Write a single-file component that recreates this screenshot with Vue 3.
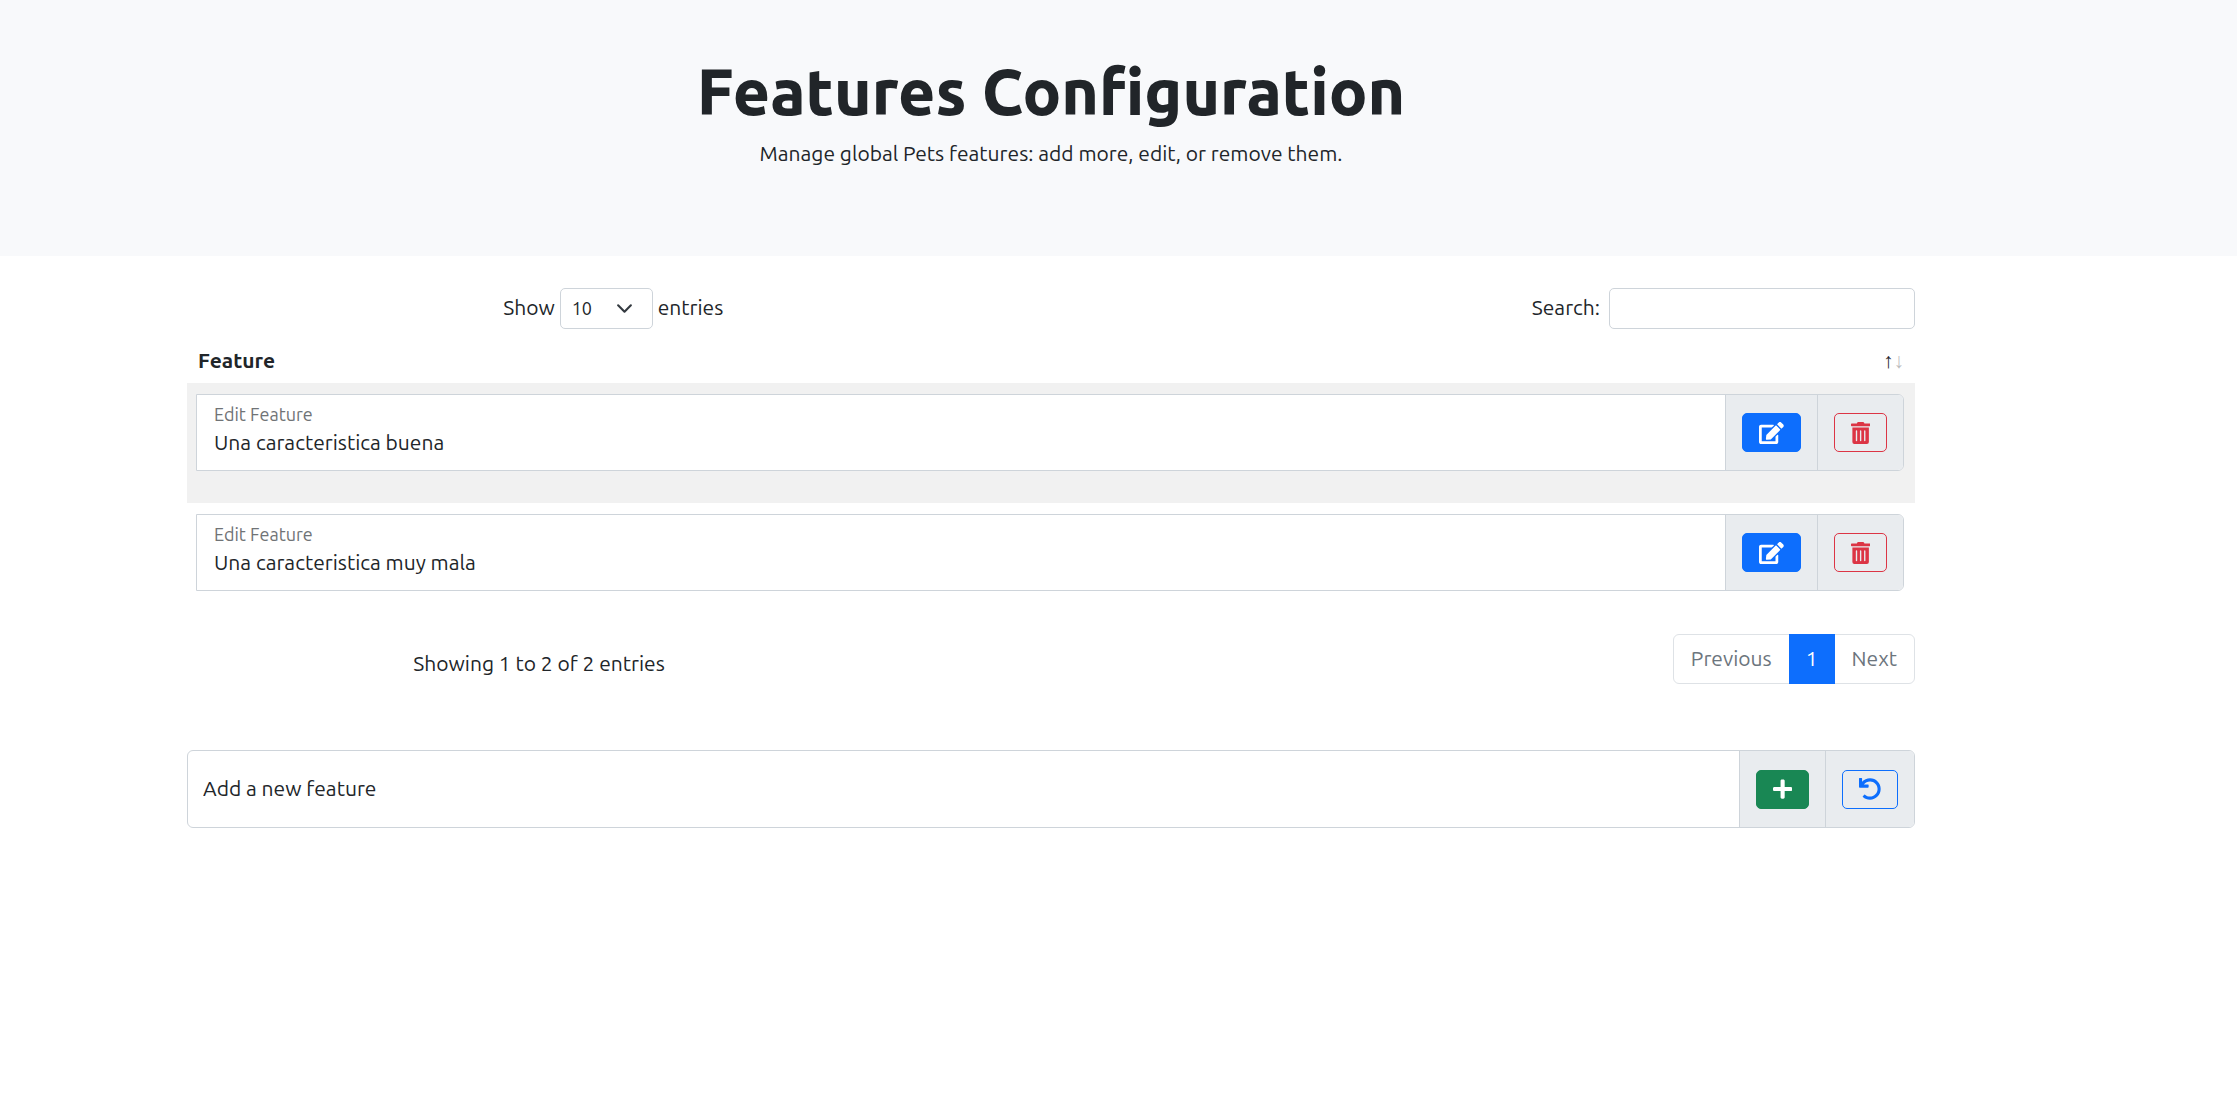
<script setup>
import { ref } from 'vue'

const icons = {
  edit: { box: '0 0 576 512', d: 'M402.6 83.2l90.2 90.2c3.8 3.8 3.8 10 0 13.8L274.4 405.6l-92.8 10.3c-12.4 1.4-22.9-9.1-21.5-21.5l10.3-92.8L388.8 83.2c3.8-3.8 10-3.8 13.8 0zm162-22.9l-48.8-48.8c-15.2-15.2-39.9-15.2-55.2 0l-35.4 35.4c-3.8 3.8-3.8 10 0 13.8l90.2 90.2c3.8 3.8 10 3.8 13.8 0l35.4-35.4c15.2-15.3 15.2-40 0-55.2zM384 346.2V448H64V128h229.8c3.2 0 6.2-1.3 8.5-3.5l40-40c7.6-7.6 2.1-20.5-8.5-20.5H48C21.5 64 0 85.5 0 112v352c0 26.5 21.5 48 48 48h352c26.5 0 48-21.5 48-48V306.2c0-10.7-12.9-16-20.5-8.5l-40 40c-2.2 2.3-3.5 5.3-3.5 8.5z' },
  trash: { box: '0 0 448 512', d: 'M32 464a48 48 0 0 0 48 48h288a48 48 0 0 0 48-48V128H32zm272-256a16 16 0 0 1 32 0v224a16 16 0 0 1-32 0zm-96 0a16 16 0 0 1 32 0v224a16 16 0 0 1-32 0zm-96 0a16 16 0 0 1 32 0v224a16 16 0 0 1-32 0zM432 32H312l-9.4-18.7A24 24 0 0 0 281.1 0H166.8a23.72 23.72 0 0 0-21.4 13.3L136 32H16A16 16 0 0 0 0 48v32a16 16 0 0 0 16 16h416a16 16 0 0 0 16-16V48a16 16 0 0 0-16-16z' },
  plus: { box: '0 0 448 512', d: 'M416 208H272V64c0-17.67-14.33-32-32-32h-32c-17.67 0-32 14.33-32 32v144H32c-17.67 0-32 14.33-32 32v32c0 17.67 14.33 32 32 32h144v144c0 17.67 14.33 32 32 32h32c17.67 0 32-14.33 32-32V304h144c17.67 0 32-14.33 32-32v-32c0-17.67-14.33-32-32-32z' },
  undo: { box: '0 0 512 512', d: 'M212.333 224.333H12c-6.627 0-12-5.373-12-12V12C0 5.373 5.373 0 12 0h48c6.627 0 12 5.373 12 12v78.112C117.773 39.279 184.26 7.47 258.175 8.007c136.906.994 246.448 111.623 246.157 248.532C504.041 393.258 393.12 504 256.333 504c-64.089 0-122.496-24.313-166.51-64.215-5.099-4.622-5.334-12.554-.467-17.42l33.967-33.967c4.474-4.474 11.662-4.717 16.401-.525C170.76 415.336 211.58 432 256.333 432c97.268 0 176-78.716 176-176 0-97.267-78.716-176-176-176-58.496 0-110.28 28.476-142.274 72.333h98.274c6.627 0 12 5.373 12 12v48c0 6.627-5.373 12-12 12z' },
}

const pageSize = ref('10')
const search = ref('')
const newFeature = ref('')
const features = ref([
  { id: 1, name: 'Una caracteristica buena' },
  { id: 2, name: 'Una caracteristica muy mala' },
])
</script>

<template>
  <div class="page">
    <header class="hero">
      <h1>Features Configuration</h1>
      <p>Manage global Pets features: add more, edit, or remove them.</p>
    </header>

    <main class="content">
      <div class="toolbar">
        <div class="length">
          <label for="page-size">Show</label>
          <select id="page-size" v-model="pageSize">
            <option>10</option>
            <option>25</option>
            <option>50</option>
          </select>
          <span>entries</span>
        </div>
        <div class="search">
          <label for="search">Search:</label>
          <input id="search" v-model="search" type="search" />
        </div>
      </div>

      <table class="features">
        <thead>
          <tr>
            <th scope="col">
              <div class="heading">
                <span>Feature</span>
                <span class="sort" aria-hidden="true"><span>↑</span><span class="dim">↓</span></span>
              </div>
            </th>
          </tr>
        </thead>
        <tbody>
          <tr v-for="feature in features" :key="feature.id">
            <td>
              <div class="group row-group">
                <div class="field">
                  <label :for="'feature-' + feature.id">Edit Feature</label>
                  <input :id="'feature-' + feature.id" v-model="feature.name" type="text" />
                </div>
                <div class="addon">
                  <button type="button" class="btn primary" aria-label="Save feature">
                    <svg class="icon" :viewBox="icons.edit.box"><path :d="icons.edit.d" /></svg>
                  </button>
                </div>
                <div class="addon">
                  <button type="button" class="btn danger" aria-label="Delete feature">
                    <svg class="icon" :viewBox="icons.trash.box"><path :d="icons.trash.d" /></svg>
                  </button>
                </div>
              </div>
            </td>
          </tr>
        </tbody>
      </table>

      <div class="footer">
        <p class="info">Showing 1 to 2 of 2 entries</p>
        <nav class="pagination" aria-label="Feature pages">
          <a href="#">Previous</a>
          <a href="#" class="active" aria-current="page">1</a>
          <a href="#">Next</a>
        </nav>
      </div>

      <form class="group add-group" @submit.prevent>
        <input v-model="newFeature" class="new-feature" type="text" placeholder="Add a new feature" aria-label="Add a new feature" />
        <div class="addon">
          <button type="submit" class="btn success" aria-label="Add feature">
            <svg class="icon" :viewBox="icons.plus.box"><path :d="icons.plus.d" /></svg>
          </button>
        </div>
        <div class="addon">
          <button type="reset" class="btn outline" aria-label="Reset">
            <svg class="icon" :viewBox="icons.undo.box"><path :d="icons.undo.d" /></svg>
          </button>
        </div>
      </form>
    </main>
  </div>
</template>

<style>
body {
  margin: 0;
  background: #fff;
}
</style>

<style scoped>
.page,
.page * {
  box-sizing: border-box;
}

.page {
  font-family: "Ubuntu", "Noto Sans", sans-serif;
  font-size: 21px;
  line-height: 32px;
  color: #212529;
}

input,
select,
button {
  font: inherit;
  color: inherit;
  margin: 0;
}

.hero {
  height: 256px;
  padding: 51px 322px 0 187px;
  background: #f8f9fb;
  text-align: center;
}

h1 {
  margin: 0 0 6px;
  font-size: 64px;
  line-height: 80px;
  font-weight: 800;
}

p {
  margin: 0;
}

.content {
  padding: 32px 322px 0 187px;
}

.toolbar {
  display: flex;
}

.length {
  flex: 1;
  display: flex;
  justify-content: center;
  align-items: center;
  gap: 5px;
  padding-right: 23px;
}

.length label,
.length span,
.search label {
  padding-bottom: 4px;
}

select {
  width: 93px;
  height: 41px;
  padding: 0 11px 2px;
  border: 1px solid #ced4da;
  border-radius: 5px;
  font-size: 18px;
  appearance: none;
  background: #fff url("data:image/svg+xml,%3csvg xmlns='http://www.w3.org/2000/svg' viewBox='0 0 16 16'%3e%3cpath fill='none' stroke='%23343a40' stroke-linecap='round' stroke-linejoin='round' stroke-width='2' d='m2 5 6 6 6-6'/%3e%3c/svg%3e") no-repeat right 19px center / 17px 17px;
}

.search {
  flex: 1;
  display: flex;
  justify-content: flex-end;
  align-items: center;
  gap: 9px;
}

.search input {
  width: 306px;
  height: 41px;
  padding: 0 11px;
  border: 1px solid #ced4da;
  border-radius: 5px;
  background: #fff;
}

.features {
  width: 100%;
  border-collapse: collapse;
}

th {
  height: 54px;
  padding: 7px 11px 0;
  text-align: left;
}

.heading {
  display: flex;
  justify-content: space-between;
}

.sort {
  display: flex;
  font-weight: 400;
  font-size: 21px;
}

.dim {
  opacity: 0.3;
}

td {
  height: 120px;
  padding: 11px 11px 0 9px;
  vertical-align: top;
}

tbody tr:nth-child(odd) {
  background: #f1f1f1;
}

.group {
  display: flex;
  border: 1px solid #ced4da;
  border-radius: 6px;
  background: #fff;
  overflow: hidden;
}

.row-group {
  height: 77px;
  border-radius: 0 6px 6px 0;
}

.add-group {
  height: 78px;
}

.field {
  flex: 1;
  display: flex;
  flex-direction: column;
  padding: 5px 17px 0;
}

.field label {
  font-size: 18px;
  line-height: 28px;
  color: #707376;
}

.field input {
  height: 28px;
  padding: 0;
  border: 0;
  background: transparent;
}

.addon {
  display: flex;
  align-items: center;
  padding: 0 16px;
  border-left: 1px solid #ced4da;
  background: #e9ecef;
}

.btn {
  display: flex;
  align-items: center;
  justify-content: center;
  height: 39px;
  padding: 0 16px;
  border: 1px solid;
  border-radius: 5px;
  background: transparent;
}

.icon {
  display: block;
  height: 22px;
  fill: currentColor;
}

.primary {
  border-color: #0d6efd;
  background: #0d6efd;
  color: #fff;
}

.danger {
  color: #dc3545;
}

.success {
  border-color: #198754;
  background: #198754;
  color: #fff;
}

.outline {
  color: #0d6efd;
}

.footer {
  display: flex;
  align-items: flex-start;
  justify-content: space-between;
  height: 116px;
  margin-top: 11px;
}

.info {
  width: 720px;
  padding: 13px 16px 0 0;
  text-align: center;
}

.pagination {
  display: flex;
  height: 50px;
  border: 1px solid #dee2e6;
  border-radius: 6px;
}

.pagination a {
  padding: 7px 17px;
  color: #6c757d;
  text-decoration: none;
}

.pagination .active {
  margin: -1px 0;
  padding: 8px 17px;
  background: #0d6efd;
  color: #fff;
}

.new-feature {
  flex: 1;
  padding: 0 15px 2px;
  border: 0;
  background: transparent;
}

.new-feature::placeholder {
  color: #212529;
  opacity: 1;
}
</style>
